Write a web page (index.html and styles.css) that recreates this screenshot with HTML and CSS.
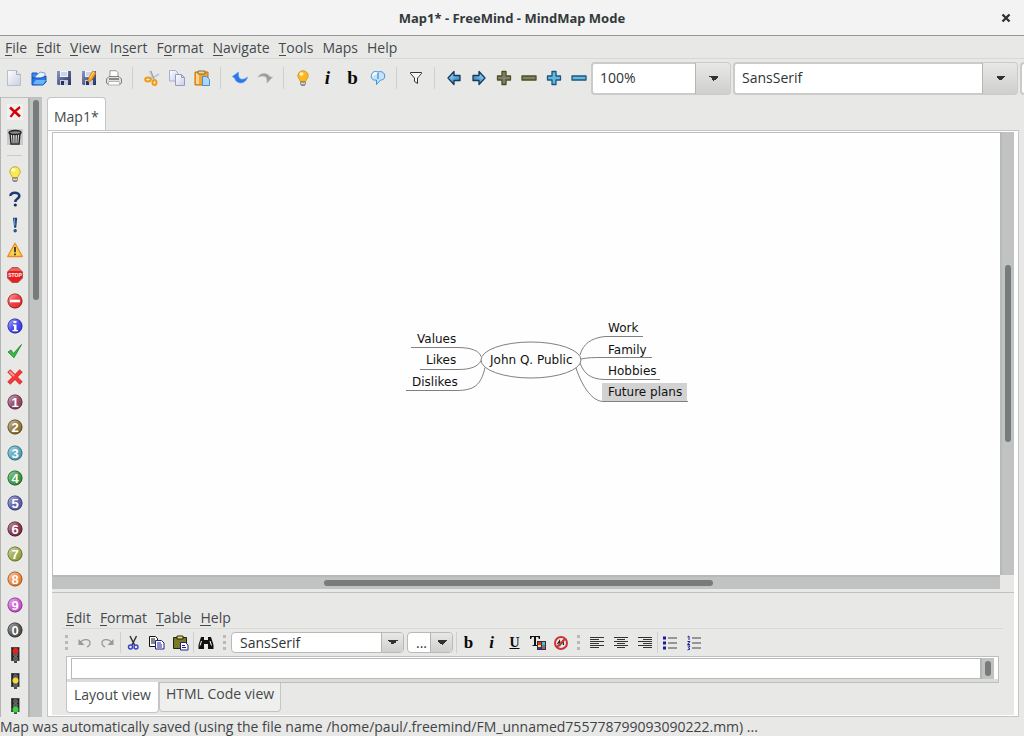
FILE: index.html
```html
<!DOCTYPE html>
<html lang="en">
<head>
<meta charset="utf-8">
<title>Map1* - FreeMind - MindMap Mode</title>
<link rel="stylesheet" href="styles.css">
</head>
<body>
<svg class="defs" aria-hidden="true">
  <defs>
    <linearGradient id="gBlue" x1="0" y1="0" x2="1" y2="1"><stop offset="0" stop-color="#b5e4fb"/><stop offset="1" stop-color="#1672b8"/></linearGradient>
    <linearGradient id="gPage" x1="0" y1="0" x2="1" y2="1"><stop offset="0" stop-color="#ffffff"/><stop offset="1" stop-color="#c9cde2"/></linearGradient>
    <linearGradient id="gDisk" x1="0" y1="0" x2="1" y2="1"><stop offset="0" stop-color="#8b9ac9"/><stop offset="1" stop-color="#262f5e"/></linearGradient>
    <linearGradient id="gShine" x1="0" y1="0" x2="1" y2="1"><stop offset="0" stop-color="#fff" stop-opacity=".6"/><stop offset=".5" stop-color="#fff" stop-opacity=".1"/><stop offset="1" stop-color="#000" stop-opacity=".15"/></linearGradient>
    <symbol id="ball" viewBox="0 0 16 16"><circle cx="8" cy="8" r="7.500" fill="currentColor"/><circle cx="8" cy="8" r="7" fill="url(#gShine)" stroke="#000" stroke-opacity=".3"/></symbol>
    <symbol id="disk" viewBox="0 0 16 16"><path d="M1 1h14v14H2l-1-1z" fill="url(#gDisk)"/><path d="M4 1h8v6H4z" fill="#f1f4fa"/><path d="M5 3h6M5 5h6" stroke="#a9b3ce"/><path d="M4 10h8v5H4z" fill="#c7cce0"/><path d="M5 11h3v4H5z" fill="#27305c"/></symbol>
    <symbol id="light" viewBox="0 0 16 16"><path d="M4 0h8.500v14H10v2H7v-2H4z" fill="#4a4a4a"/><path d="M5 1h7v12H5z" fill="#222"/><g fill="#555" stroke="#888" stroke-width=".6"><circle cx="8.500" cy="3.500" r="2"/><circle cx="8.500" cy="7.500" r="2"/><circle cx="8.500" cy="11.500" r="2"/></g></symbol>
    <symbol id="lamp" viewBox="0 0 16 16"><path d="M8 .7a5.200 5.200 0 0 0-5.200 5.200C2.800 8.300 5 9 5.300 11.500h5.400C11 9 13.200 8.300 13.200 5.900A5.200 5.200 0 0 0 8 .7z" fill="currentColor" stroke="#b98618" stroke-width=".7"/><ellipse cx="6.500" cy="4" rx="2" ry="1.800" fill="#fff" opacity=".8"/><path d="M5.700 12h4.600v2.500l-1 1.200H6.700l-1-1.200z" fill="#989898" stroke="#555" stroke-width=".5"/><path d="M6 13.300h4" stroke="#eee"/></symbol>
    <symbol id="arrow" viewBox="0 0 16 16"><path d="M2 8l6-6.500v4h6v5H8v4z" fill="url(#gBlue)" stroke="#14395c" stroke-width="1.300" stroke-linejoin="round"/></symbol>
    <symbol id="plus" viewBox="0 0 16 16"><path d="M6 1.500h4V6h4.500v4H10v4.500H6V10H1.500V6H6z" stroke-width="1.300" stroke-linejoin="round"/></symbol>
    <symbol id="minus" viewBox="0 0 16 16"><path d="M1 6h14v4H1z" stroke-width="1.300" stroke-linejoin="round"/></symbol>
  </defs>
</svg>

<header class="titlebar">
  <h1 class="title">Map1* - FreeMind - MindMap Mode</h1>
  <button class="close" aria-label="Close"><svg viewBox="0 0 10 10" width="10" height="10"><path d="M1.500 1.500l7 7M8.500 1.500l-7 7" stroke="#2e3436" stroke-width="2.400"/></svg></button>
</header>

<nav class="menubar" aria-label="Main menu">
  <button><u>F</u>ile</button><button><u>E</u>dit</button><button><u>V</u>iew</button><button>In<u>s</u>ert</button><button>F<u>o</u>rmat</button><button><u>N</u>avigate</button><button><u>T</u>ools</button><button>Maps</button><button>Help</button>
</nav>

<div class="toolbar" role="toolbar" aria-label="Main toolbar">
  <button aria-label="New"><svg class="icon" viewBox="0 0 16 16"><path d="M1.500 .5h9l4 4v11h-13z" fill="url(#gPage)" stroke="#b9bccb"/><path d="M10.500 .5v4h4" fill="#e9eaf3" stroke="#a9acc0"/></svg></button>
  <button aria-label="Open"><svg class="icon" viewBox="0 0 16 16"><path d="M1 3h5l1 2h5v3H1z" fill="#3f86e8" stroke="#1b56bd"/><path d="M4 7l5-5 5 1v6l-8 3z" fill="#e8f2fd" stroke="#7ba5d8"/><path d="M1 15V8h9l5-2v6l-3 3z" fill="#2d78e6" stroke="#184fb5"/><path d="M2 14l3-4h10l-3 4.500z" fill="#69b7fb"/></svg></button>
  <button aria-label="Save"><svg class="icon"><use href="#disk"/></svg></button>
  <button aria-label="Save as"><svg class="icon" viewBox="0 0 16 16"><use href="#disk" width="16" height="16"/><path d="M7 9l4.500-8 3.500 2-4.500 7.500L7 12z" fill="#f7a51b" stroke="#c77112" stroke-width=".6"/><path d="M9 8l4-6.500" stroke="#ffe487"/></svg></button>
  <button aria-label="Print"><svg class="icon" viewBox="0 0 16 16"><path d="M4 8V.7h6l2 2V8" fill="#fff" stroke="#999"/><path d="M3 6.500h10l2.500 2.500v4l-1.500 1H2L.5 13V9z" fill="#e0e0e0" stroke="#666" stroke-width=".8"/><path d="M3 9h10" stroke="#333"/><path d="M3 11.500h10l1 3.500H2z" fill="#fff" stroke="#999" stroke-width=".7"/></svg></button>
  <span class="sep"></span>
  <button aria-label="Cut"><svg class="icon" viewBox="0 0 16 16"><path d="M6 1l3.500 8M15 4L6 9.500" stroke="#bfc5d2" stroke-width="2"/><path d="M7 1l3 8" stroke="#8990a1" stroke-width=".8"/><ellipse cx="4" cy="9.500" rx="2.800" ry="2" fill="none" stroke="#f19a13" stroke-width="2"/><ellipse cx="10.500" cy="12.500" rx="2" ry="2.500" fill="none" stroke="#f19a13" stroke-width="2"/></svg></button>
  <button aria-label="Copy"><svg class="icon" viewBox="0 0 16 16"><path d="M.5 .5h6l2.500 2.500v8H.5z" fill="url(#gPage)" stroke="#a9afd0"/><path d="M6.500 4.500h6l3 3v8h-9z" fill="url(#gPage)" stroke="#949cc6"/><path d="M12.500 4.500v3h3" fill="none" stroke="#949cc6"/></svg></button>
  <button aria-label="Paste"><svg class="icon" viewBox="0 0 16 16"><path d="M1 2h13v13H1z" fill="#f2a532" stroke="#bd7211"/><path d="M2 3h3v11H2z" fill="#ffd684"/><path d="M4 1h7v3H4z" fill="#e7d7a7" stroke="#8c6a2b"/><path d="M8.500 6.500h4l3 3v6h-7z" fill="#a9d8fa" stroke="#4b91c7"/></svg></button>
  <span class="sep"></span>
  <button aria-label="Undo"><svg class="icon" viewBox="0 0 16 16"><path d="M.3 6.500L6.500 2v3c0 5 5 5.500 9 2-1 5-6 7.500-10 5C3.500 11 3 9.500 3 8.500z" fill="#2b75e8" stroke="#5ea0ff" stroke-width=".7"/></svg></button>
  <button aria-label="Redo"><svg class="icon" viewBox="0 0 16 16"><path d="M15.500 7L10 13v-3c0-4-4-5-9-3 2-4 9-5 12 0z" fill="#9a9a9a" stroke="#b5b5b5" stroke-width=".7"/></svg></button>
  <span class="sep"></span>
  <button aria-label="Blink"><svg class="icon lamp-on"><use href="#lamp"/></svg></button>
  <button class="glyph slant" aria-label="Italic">i</button>
  <button class="glyph" aria-label="Bold">b</button>
  <button aria-label="Cloud"><svg class="icon" viewBox="0 0 16 16"><path d="M2 4c1-3 4-3 6-2 3-1 6 0 6.500 3 1 3-1 5-4 5l-4 4.500V10C2 11 0 7 2 4z" fill="#c5e4fb" stroke="#418fd6"/><path d="M3 6c0-3 3-3 4-2" fill="none" stroke="#fff" stroke-width="2"/><path d="M8 3v6" stroke="#2173c4"/></svg></button>
  <span class="sep"></span>
  <button aria-label="Filter"><svg class="icon" viewBox="0 0 16 16"><path d="M2.500 2.500h11v1L9.500 8v5.500l-3-2V8l-4-4.500z" fill="#f5f5f5" stroke="#333"/><path d="M9.500 8l2-2.500" stroke="#999"/></svg></button>
  <span class="sep"></span>
  <button aria-label="Previous map"><svg class="icon"><use href="#arrow"/></svg></button>
  <button aria-label="Next map"><svg class="icon flip"><use href="#arrow"/></svg></button>
  <button aria-label="Expand one level"><svg class="icon olive"><use href="#plus"/></svg></button>
  <button aria-label="Collapse one level"><svg class="icon olive"><use href="#minus"/></svg></button>
  <button aria-label="Zoom in"><svg class="icon azure"><use href="#plus"/></svg></button>
  <button aria-label="Zoom out"><svg class="icon azure"><use href="#minus"/></svg></button>
  <div class="combos">
    <label class="combo zoom"><select aria-label="Zoom"><option>100%</option></select></label>
    <label class="combo font"><select aria-label="Font"><option>SansSerif</option></select></label>
    <span class="combo-edge"></span>
  </div>
</div>

<div class="workspace">
  <aside class="side">
    <div class="palette" role="toolbar" aria-label="Icons">
      <div class="tools">
        <button aria-label="Remove last icon"><svg class="icon" viewBox="0 0 16 16"><path d="M0 0h16v16H0z" fill="#f0f0f0"/><path d="M3 3.500l10 9" stroke="#d40000" stroke-width="2.600"/><path d="M13 3c-4 3-7 6-9.500 10" stroke="#d40000" stroke-width="2.200" fill="none"/></svg></button>
        <button aria-label="Remove all icons"><svg class="icon" viewBox="0 0 16 16"><path d="M0 0h16v16H0z" fill="#c9c9c9"/><path d="M3 4h10l-1 11H4z" fill="#ddd" stroke="#222" stroke-width="1.400"/><ellipse cx="8" cy="3.500" rx="6" ry="2" fill="#888" stroke="#222" stroke-width="1.400"/><path d="M5.500 6l.5 8M8 6v8M10.500 6l-.5 8" stroke="#333"/></svg></button>
      </div>
      <div class="rule"></div>
      <div class="icons">
        <button aria-label="Idea"><svg class="icon lamp-off"><use href="#lamp"/></svg></button>
        <button aria-label="Question"><svg class="icon" viewBox="0 0 16 16"><path d="M3.500 5C3 .8 12.500 .5 12.300 5c0 3-4 2.500-4 6" fill="none" stroke="#1d3b72" stroke-width="2.600"/><circle cx="8.300" cy="14" r="1.600" fill="#172c5c"/></svg></button>
        <button aria-label="Important"><svg class="icon" viewBox="0 0 16 16"><path d="M6 .8h4.200l-1 10H7.200z" fill="#1b4478"/><path d="M7.500 1.500l.3 7" stroke="#76a6cf"/><circle cx="8.200" cy="13.800" r="1.700" fill="#24538b"/></svg></button>
        <button aria-label="Warning"><svg class="icon" viewBox="0 0 16 16"><path d="M8 1.300L15.300 14.500H.7z" fill="#fbd34b" stroke="#e88b28" stroke-width="1.300" stroke-linejoin="round"/><path d="M8 5v5.200M8 11.500v1.700" stroke="#333" stroke-width="1.800"/></svg></button>
        <button aria-label="Stop"><svg class="icon" viewBox="0 0 16 16"><path d="M5 .5h6L15.500 5v6L11 15.500H5L.5 11V5z" fill="#e81d1d" stroke="#a55"/><path d="M5 1h6l3 3H2z" fill="#fff" opacity=".3"/><text x="8" y="10" text-anchor="middle" font-family="Liberation Sans" font-weight="700" font-size="5" fill="#fff">STOP</text></svg></button>
        <button aria-label="Closed"><svg class="icon red" viewBox="0 0 16 16"><use href="#ball" width="16" height="16"/><path d="M3 6.700h10v2.600H3z" fill="#fff"/></svg></button>
        <button aria-label="Info"><svg class="icon info" viewBox="0 0 16 16"><use href="#ball" width="16" height="16"/><path d="M6.500 3h3v2h-3zM6 6.500h3.500V12H11v1.200H5.500V12H7V8H6z" fill="#fff"/></svg></button>
        <button aria-label="OK"><svg class="icon" viewBox="0 0 16 16"><path d="M1 9l3-2 2.500 3.500L14.500 1.500 7 14.700z" fill="#2fc23d" stroke="#237a2e" stroke-width=".8"/></svg></button>
        <button aria-label="Not OK"><svg class="icon" viewBox="0 0 16 16"><path d="M1.800 1.800l12.400 12.400M14.200 1.800L1.800 14.200" stroke="#c43a3a" stroke-width="4.200"/><path d="M2.300 2.300l11.400 11.400M13.700 2.300L2.300 13.700" stroke="#fb3533" stroke-width="3.200"/><path d="M2.500 2.500l4.500 4.500" stroke="#ff9a93" stroke-width="2"/></svg></button>
        <button aria-label="Priority 1"><svg class="icon p1" viewBox="0 0 16 16"><use href="#ball" width="16" height="16"/><text class="digit" x="8" y="12.500">1</text></svg></button>
        <button aria-label="Priority 2"><svg class="icon p2" viewBox="0 0 16 16"><use href="#ball" width="16" height="16"/><text class="digit" x="8" y="12.500">2</text></svg></button>
        <button aria-label="Priority 3"><svg class="icon p3" viewBox="0 0 16 16"><use href="#ball" width="16" height="16"/><text class="digit" x="8" y="12.500">3</text></svg></button>
        <button aria-label="Priority 4"><svg class="icon p4" viewBox="0 0 16 16"><use href="#ball" width="16" height="16"/><text class="digit" x="8" y="12.500">4</text></svg></button>
        <button aria-label="Priority 5"><svg class="icon p5" viewBox="0 0 16 16"><use href="#ball" width="16" height="16"/><text class="digit" x="8" y="12.500">5</text></svg></button>
        <button aria-label="Priority 6"><svg class="icon p6" viewBox="0 0 16 16"><use href="#ball" width="16" height="16"/><text class="digit" x="8" y="12.500">6</text></svg></button>
        <button aria-label="Priority 7"><svg class="icon p7" viewBox="0 0 16 16"><use href="#ball" width="16" height="16"/><text class="digit" x="8" y="12.500">7</text></svg></button>
        <button aria-label="Priority 8"><svg class="icon p8" viewBox="0 0 16 16"><use href="#ball" width="16" height="16"/><text class="digit" x="8" y="12.500">8</text></svg></button>
        <button aria-label="Priority 9"><svg class="icon p9" viewBox="0 0 16 16"><use href="#ball" width="16" height="16"/><text class="digit" x="8" y="12.500">9</text></svg></button>
        <button aria-label="Priority 0"><svg class="icon p0" viewBox="0 0 16 16"><use href="#ball" width="16" height="16"/><text class="digit" x="8" y="12.500">0</text></svg></button>
        <button aria-label="Red light"><svg class="icon" viewBox="0 0 16 16"><use href="#light" width="16" height="16"/><circle cx="8.500" cy="4" r="3" fill="#e3201f"/></svg></button>
        <button aria-label="Yellow light"><svg class="icon" viewBox="0 0 16 16"><use href="#light" width="16" height="16"/><circle cx="8.500" cy="7.500" r="3" fill="#f3d93c"/></svg></button>
        <button aria-label="Green light"><svg class="icon" viewBox="0 0 16 16"><use href="#light" width="16" height="16"/><circle cx="8.500" cy="11.500" r="3" fill="#3ad13f"/></svg></button>
      </div>
    </div>
    <div class="track side-track"><span class="thumb"></span></div>
  </aside>

  <main class="document">
    <div class="tabs" role="tablist"><button class="tab" role="tab" aria-selected="true">Map1*</button></div>
    <div class="frame">
      <div class="map-scroll">
        <div class="map">
          <svg class="edges" width="700" height="300" fill="none" stroke="#808080">
            <ellipse cx="478" cy="227" rx="50" ry="18"/>
            <path d="M358 214.500h46c14 0 22 3 24 9M367 236.500h38c13 0 20-3 23-9M353 257.500h50c18 0 25-5 29-23"/>
            <path d="M527 222c3-11 11-17 25-18.500h38M528 226c7-1.500 13-1.500 22-1.500h49M527 230c4 11 11 16 24 16.500h56M523 235c7 21 17 33 27 33.500h85"/>
          </svg>
          <span class="node values">Values</span>
          <span class="node likes">Likes</span>
          <span class="node dislikes">Dislikes</span>
          <span class="node root">John Q. Public</span>
          <span class="node work">Work</span>
          <span class="node family">Family</span>
          <span class="node hobbies">Hobbies</span>
          <span class="node plans selected">Future plans</span>
        </div>
        <div class="track map-v"><span class="thumb"></span></div>
        <div class="track map-h"><span class="thumb"></span></div>
      </div>

      <section class="editor">
        <nav class="menubar note-menu" aria-label="Note menu">
          <button><u>E</u>dit</button><button><u>F</u>ormat</button><button><u>T</u>able</button><button><u>H</u>elp</button>
        </nav>
        <div class="note-toolbar" role="toolbar" aria-label="Note toolbar">
          <span class="grip"></span>
          <button aria-label="Undo"><svg class="icon" viewBox="0 0 16 16" fill="none" stroke="#999"><path d="M4 8c3-5 10-4 10 0 0 2-1 3-3 4" stroke-width="1.300"/><path d="M2.500 4v6h6z" fill="#999" stroke="none"/></svg></button>
          <button aria-label="Redo"><svg class="icon flip" viewBox="0 0 16 16" fill="none" stroke="#999"><path d="M4 8c3-5 10-4 10 0 0 2-1 3-3 4" stroke-width="1.300"/><path d="M2.500 4v6h6z" fill="#999" stroke="none"/></svg></button>
          <span class="bar"></span>
          <button aria-label="Cut"><svg class="icon" viewBox="0 0 16 16" fill="none"><path d="M5 1l4.500 9M11.500 1L7 10" stroke="#333" stroke-width="1.500"/><circle cx="5.500" cy="12" r="2" stroke="#3742c5" stroke-width="1.400"/><circle cx="11" cy="12" r="2" stroke="#3742c5" stroke-width="1.400"/></svg></button>
          <button aria-label="Copy"><svg class="icon" viewBox="0 0 16 16"><path d="M.5 1.500h6l2 2v8h-8z" fill="#fff" stroke="#111"/><path d="M2 4h4M2 6h4M2 8h4" stroke="#111"/><path d="M6.500 5.500h6l2.500 2.500v6H6.500z" fill="#fff" stroke="#20208c"/><path d="M8 8h4M8 10h5M8 12h5" stroke="#20208c"/></svg></button>
          <button aria-label="Paste"><svg class="icon" viewBox="0 0 16 16"><path d="M.5 2.500h13v11H.5z" fill="#7b7a22" stroke="#222"/><path d="M4 1h6v3H4z" fill="#ece04d" stroke="#222"/><path d="M7.500 7.500h5l2.500 2.500v5H7.500z" fill="#fff" stroke="#20208c"/><path d="M9 10.500h3M9 12.500h4" stroke="#20208c"/></svg></button>
          <span class="bar"></span>
          <button aria-label="Find"><svg class="icon" viewBox="0 0 16 16"><path d="M3 2h3v3h4V2h3l2.500 8v4H10V9H6v5H.5v-4z" fill="#111"/><path d="M3.500 6L2 10.500M12 6l1.500 4.500" stroke="#fff"/></svg></button>
          <span class="grip"></span>
          <label class="combo small family-select"><select aria-label="Note font"><option>SansSerif</option></select></label>
          <label class="combo small size-select"><select aria-label="Note size"><option>...</option></select></label>
          <span class="bar"></span>
          <div class="styles">
            <button class="glyph" aria-label="Bold">b</button>
            <button class="glyph slant" aria-label="Italic">i</button>
            <button class="glyph under" aria-label="Underline">U</button>
            <button aria-label="Text color"><svg class="icon" viewBox="0 0 16 16"><path d="M0 1h10v3H9L8 2H6v8h1.500v1h-5v-1H4V2H2L1 4H0z" fill="#111"/><path d="M7 6h9v9H7z" fill="#333"/><path d="M8 7h3v3H8z" fill="#d33"/><path d="M12 7h3v3h-3z" fill="#4ab8ec"/><path d="M8 10h3v2H8z" fill="#ffe72f"/><path d="M12 10h3v2h-3z" fill="#4a9b38"/><path d="M8 12h3v2H8z" fill="#2834cf"/><path d="M12 12h3v2h-3z" fill="#cc35c6"/></svg></button>
            <button aria-label="Clear formatting"><svg class="icon" viewBox="0 0 16 16" fill="none"><path d="M4.500 9l2-3 .5 4 3-4 .5 4" stroke="#222" stroke-width="1.300"/><circle cx="8" cy="8" r="6" stroke="#cb3434" stroke-width="2"/><path d="M12 4l-8 8" stroke="#cb3434" stroke-width="2"/></svg></button>
          </div>
          <span class="grip"></span>
          <button aria-label="Align left"><svg class="icon" viewBox="0 0 16 16" stroke="#333" stroke-width="1.200"><path d="M1 2.500h14M1 4.500h9M1 6.500h14M1 8.500h9M1 10.500h14M1 12.500h9"/></svg></button>
          <button aria-label="Align center"><svg class="icon" viewBox="0 0 16 16" stroke="#333" stroke-width="1.200"><path d="M1 2.500h14M4 4.500h8M1 6.500h14M4 8.500h8M1 10.500h14M4 12.500h8"/></svg></button>
          <button aria-label="Align right"><svg class="icon" viewBox="0 0 16 16" stroke="#333" stroke-width="1.200"><path d="M1 2.500h14M6 4.500h9M1 6.500h14M6 8.500h9M1 10.500h14M6 12.500h9"/></svg></button>
          <span class="bar"></span>
          <button aria-label="Bulleted list"><svg class="icon" viewBox="0 0 16 16"><path d="M1 1.500h3v3H1zM1 6.500h3v3H1zM1 11.500h3v3H1z" fill="#1a1a9c"/><path d="M6 3h9M6 8h9M6 13h9" stroke="#444" stroke-width="1.200"/></svg></button>
          <button aria-label="Numbered list"><svg class="icon" viewBox="0 0 16 16"><path d="M1.500 2L3 1v4M1.500 6.500H4L1.500 9.500H4M1.500 11H4L2.500 13 4 14l-2.500 1" fill="none" stroke="#1a1a9c"/><path d="M6 3h9M6 8h9M6 13h9" stroke="#444" stroke-width="1.200"/></svg></button>
        </div>
        <div class="note-box">
          <textarea class="note" rows="1" aria-label="Note"></textarea>
          <div class="track note-track"><span class="thumb"></span></div>
        </div>
        <div class="note-tabs" role="tablist">
          <button class="note-tab active" role="tab" aria-selected="true">Layout view</button><button class="note-tab" role="tab" aria-selected="false">HTML Code view</button>
        </div>
      </section>
    </div>
  </main>
</div>

<footer class="status">Map was automatically saved (using the file name /home/paul/.freemind/FM_unnamed755778799093090222.mm) ...</footer>
</body>
</html>
```
FILE: styles.css
```css
* { box-sizing: border-box; }

body {
  margin: 0;
  height: 100vh;
  display: flex;
  flex-direction: column;
  overflow: hidden;
  background: #e8e8e7;
  color: #45494b;
  font: 14px/20px "Open Sans", "Noto Sans", sans-serif;
}

button, select, textarea { font: inherit; color: inherit; }

button {
  display: flex;
  align-items: center;
  justify-content: center;
  padding: 0;
  border: 0;
  background: none;
}

/* Mnemonic letters */
u {
  background: linear-gradient(currentColor, currentColor) 0 17px / 100% 1px no-repeat;
  text-decoration: none;
}

.defs { position: absolute; width: 0; height: 0; }
.icon { display: block; flex: none; width: 16px; height: 16px; }
.flip { transform: scaleX(-1); }
.olive { fill: #817f70; stroke: #4d4f19; }
.azure { fill: #65b7dc; stroke: #1b5680; }
.lamp-on { color: #ffb81c; }
.lamp-off { color: #f8ec50; }

/* Title bar */
.titlebar {
  display: grid;
  grid-template-columns: 36px 1fr 36px;
  align-items: center;
  height: 36px;
  flex: none;
  border-bottom: 1px solid #969796;
  background: #f3f3f3;
}
.title {
  grid-column: 2;
  margin: 0;
  color: #33393b;
  font: 700 13px/20px "Noto Sans", sans-serif;
  text-align: center;
}
.close { height: 100%; }

/* Menus */
.menubar {
  display: flex;
  gap: 9px;
  height: 23px;
  flex: none;
  padding: 2px 5px 0;
  border-bottom: 1px solid #d8d8d7;
}

/* Main toolbar */
.toolbar {
  display: flex;
  align-items: center;
  height: 38px;
  flex: none;
  padding-left: 1px;
}
.toolbar > button { width: 25px; height: 28px; flex: none; }
.sep { width: 1px; height: 22px; margin: 0 6px; flex: none; background: #d0d0cf; }
.glyph {
  color: #0a0a0a;
  font-family: "Liberation Serif", serif;
  font-size: 19px;
  font-weight: 700;
}
.slant { font-style: italic; }
.combos { display: flex; flex: 1; gap: 2px; }

.combo {
  position: relative;
  height: 33px;
  border: 2px solid #cbcbca;
  border-radius: 4px;
  background: #fff;
}
.combo select {
  display: block;
  width: 100%;
  height: 100%;
  padding: 0 36px 0 7px;
  border: 0;
  background: none;
  appearance: none;
  color: #2e3436;
}
.combo::after {
  content: "";
  position: absolute;
  inset: -1px -1px -1px auto;
  width: 34px;
  border-left: 1px solid #b5b5b4;
  border-radius: 0 3px 3px 0;
  background:
    linear-gradient(to bottom right, #2e3436 50%, transparent 50%) calc(50% + 3px) 50% / 5px 5px no-repeat,
    linear-gradient(to bottom left, #2e3436 50%, transparent 50%) calc(50% - 2px) 50% / 5px 5px no-repeat,
    linear-gradient(#e8e8e7, #cfcfce);
  pointer-events: none;
}
.zoom { width: 140px; flex: none; }
.font { flex: 1; }
.combo-edge {
  width: 4px;
  border: 2px solid #cbcbca;
  border-right: 0;
  border-radius: 4px 0 0 4px;
  background: #fff;
}

/* Scroll tracks */
.track { position: relative; background: #c0c3c2; }
.thumb { position: absolute; border-radius: 3px; background: #777b7b; }

/* Workspace */
.workspace { display: flex; flex: 1; gap: 5px; min-height: 0; }
.side {
  display: flex;
  width: 42px;
  flex: none;
  border-top: 1px solid #bdbfbe;
  border-left: 1px solid #b3b5b4;
}
.palette {
  display: flex;
  flex-direction: column;
  width: 27px;
  flex: none;
  padding: 6px 0 3px;
}
.tools, .icons { display: flex; flex-direction: column; align-items: center; }
.tools { gap: 9px; }
.rule { height: 1px; margin: 10px 6px; background: #cbcbca; }
.icons { flex: 1; justify-content: space-between; }
.side-track { flex: 1; border-left: 2px solid #b0b3b2; }
.side-track .thumb { top: 2px; right: 3px; width: 6px; height: 200px; }
.digit {
  fill: #fff;
  font: 700 13px "Liberation Sans", sans-serif;
  text-anchor: middle;
}
.red { color: #ef2b2b; }
.info { color: #3939ef; }
.p1 { color: #8c3f60; }
.p2 { color: #8a6f2f; }
.p3 { color: #4ba3bb; }
.p4 { color: #2f9338; }
.p5 { color: #5257a8; }
.p6 { color: #7c2744; }
.p7 { color: #9aa642; }
.p8 { color: #ef8137; }
.p9 { color: #cb4fd0; }
.p0 { color: #4a4a4a; }

.document {
  display: flex;
  flex-direction: column;
  flex: 1;
  min-width: 0;
  padding-right: 5px;
}
.tabs { display: flex; height: 33px; flex: none; }
.tab {
  padding: 6px 6px 0;
  border: 1px solid #c4c5c4;
  border-bottom: 0;
  border-radius: 4px 4px 0 0;
  background: #fff;
}
.frame {
  display: flex;
  flex-direction: column;
  flex: 1;
  min-height: 0;
  padding: 1px 4px;
  border: 1px solid #c4c5c4;
  background: #fff;
}

/* Map */
.map-scroll {
  display: grid;
  grid-template: 1fr 14px / 1fr 14px;
  flex: 1;
  min-height: 0;
  background: #e8e8e7;
}
.map {
  position: relative;
  overflow: hidden;
  border-top: 1px solid #bdbfbe;
  border-left: 1px solid #bdbfbe;
  background: #fefefe;
}
.map-v { border-left: 2px solid #b7b9b6; }
.map-v .thumb { bottom: 30%; right: 3px; width: 6px; height: 40%; }
.map-h { border-top: 2px solid #b7b9b6; }
.map-h .thumb { right: calc(30% + 3px); bottom: 3px; width: 41%; height: 6px; }
.edges { position: absolute; top: 0; left: 0; }
.node {
  position: absolute;
  color: #111;
  font: 12px/16px "DejaVu Sans", sans-serif;
  white-space: nowrap;
}
.values { top: 198px; left: 364px; }
.likes { top: 219px; left: 373px; }
.dislikes { top: 241px; left: 359px; }
.root { top: 219px; left: 437px; }
.work { top: 187px; left: 555px; }
.family { top: 209px; left: 555px; }
.hobbies { top: 230px; left: 555px; }
.plans { top: 250px; left: 549px; }
.selected { padding: 1px 5px 1px 6px; background: #d2d2d2; }

/* Note editor */
.editor {
  flex: none;
  padding: 18px 15px 2px 14px;
  border-top: 1px solid #c0c1c0;
  margin-top: 3px;
  background: #e8e8e7;
  box-shadow: 0 -3px #e8e8e7;
}
.note-menu { height: 22px; margin: -4px -4px 0; padding: 1px 4px 0; }
.note-toolbar { display: flex; align-items: center; height: 27px; color: #2e3436; }
.note-toolbar button { width: 24px; height: 24px; flex: none; }
.note-toolbar .glyph { font-size: 17px; }
.note-toolbar .under { font-size: 14px; text-decoration: underline; }
.styles { display: flex; }
.note-toolbar .styles button { width: 23px; }
.grip {
  width: 3px;
  height: 15px;
  flex: none;
  margin: 0 5px;
  background: repeating-linear-gradient(#b9b9b8 0 3px, transparent 3px 6px);
}
.grip:first-child { margin: 0 4px 0 -1px; }
.bar { width: 1px; height: 21px; flex: none; background: #d0d0cf; }
.small { height: 21px; border-width: 1px; border-color: #b9b9b8; }
.small select { padding: 0 20px 0 8px; line-height: 18px; }
.small::after { inset: 0 0 0 auto; width: 21px; }
.family-select { width: 173px; margin-right: 3px; }
.size-select { width: 46px; margin-right: 3px; }

.note-box {
  display: flex;
  padding: 1px 4px 3px;
  border: 1px solid #bdbfbe;
  background: linear-gradient(#fff 22px, #dcdcda 22px);
}
.note {
  display: block;
  flex: 1;
  height: 21px;
  padding: 0 4px;
  border: 1px solid #b7b9b6;
  border-right: 0;
  background: #fff;
  resize: none;
  overflow: hidden;
}
.note-track { width: 14px; border-left: 2px solid #b0b3b2; }
.note-track .thumb { inset: 3px 3px 3px auto; width: 6px; }
.note-tabs { display: flex; align-items: flex-start; }
.note-tab {
  height: 29px;
  padding: 0 6px 6px;
  border: 1px solid #c4c5c4;
  border-top: 0;
  border-radius: 0 0 4px 4px;
  background: #efefee;
}
.note-tab.active { height: 31px; margin-top: -1px; padding: 0 7px 4px; background: #fff; }

.status { flex: none; height: 19px; color: #3f4446; white-space: nowrap; }
```
